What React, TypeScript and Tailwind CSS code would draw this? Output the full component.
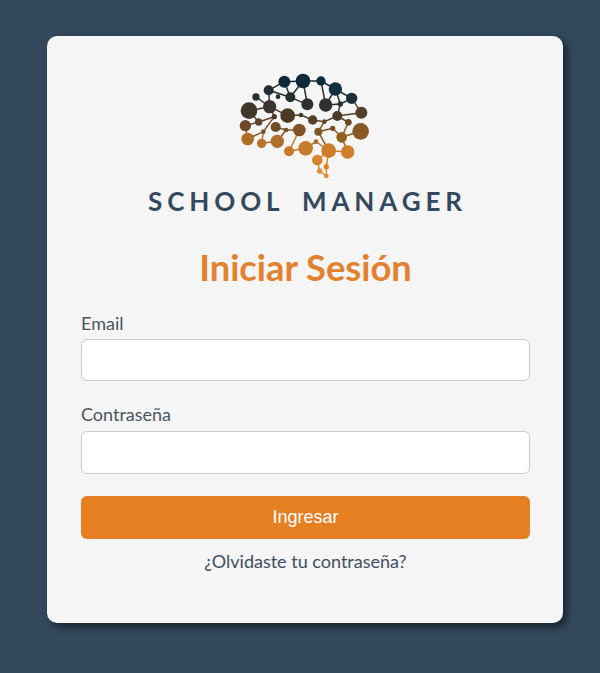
const nodes: [number, number, number, string][] = [
  [190, 50, 16, "#0e2a38"], [246, 48, 20, "#0e2a38"], [300, 48, 12, "#0f2c3a"], [343, 72, 18, "#10303f"],
  [392, 100, 15, "#1c2f38"], [143, 76, 13, "#1f2f35"], [105, 96, 9, "#24302f"], [171, 95, 5, "#1f2f35"],
  [208, 97, 13, "#22302f"], [259, 118, 16, "#2d3030"], [314, 120, 18, "#30302f"], [358, 117, 6, "#2d3030"],
  [84, 137, 23, "#40362a"], [146, 125, 18, "#3a3530"], [200, 152, 20, "#4a3a25"], [160, 155, 6, "#4a3a25"],
  [240, 150, 5, "#4a3a25"], [275, 165, 12, "#55412a"], [349, 153, 13, "#4a3c28"], [421, 143, 16, "#54402a"],
  [113, 171, 9, "#5e4528"], [73, 182, 15, "#6a4a28"], [164, 186, 13, "#6e4c26"], [127, 200, 5, "#7a5026"],
  [195, 195, 5, "#7a5026"], [235, 195, 17, "#7f5325"], [292, 200, 10, "#7f5a28"], [310, 170, 5, "#604628"],
  [335, 190, 6, "#7a5026"], [382, 172, 8, "#6a4a28"], [419, 199, 23, "#8a5824"], [362, 217, 14, "#96601f"],
  [80, 222, 17, "#b06f28"], [122, 235, 12, "#b8722a"], [169, 229, 18, "#b0702a"], [204, 259, 13, "#c67a2a"],
  [254, 250, 20, "#c67a2a"], [285, 230, 5, "#a86c28"], [323, 257, 20, "#cd7d2a"], [380, 261, 18, "#cf7e29"],
  [289, 285, 14, "#d8852e"], [316, 305, 6, "#d8852e"], [296, 318, 6, "#de8c36"], [316, 333, 5, "#de8c36"],
];

const edges: [number, number][] = [
  [0, 5], [0, 1], [1, 2], [2, 3], [3, 4], [5, 8], [0, 8], [1, 8], [8, 9], [1, 9], [2, 10], [3, 10],
  [10, 11], [3, 11], [11, 4], [4, 19], [11, 18], [18, 19], [6, 13], [5, 13], [12, 13], [13, 14],
  [13, 15], [15, 20], [14, 16], [16, 17], [17, 27], [27, 18], [12, 20], [20, 21], [21, 32], [15, 23],
  [23, 33], [32, 23], [33, 34], [34, 24], [24, 25], [22, 24], [25, 35], [35, 36], [36, 37],
  [37, 38], [38, 26], [26, 28], [28, 31], [27, 26], [29, 18], [29, 31], [31, 30], [38, 39],
  [39, 31], [38, 40], [38, 41], [40, 42], [41, 43], [42, 43],
];

function BrainLogo() {
  return (
    <svg viewBox="15 0 480 360" className="w-40 h-[120px]">
      {edges.map(([a, b], i) => (
        <line
          key={i}
          x1={nodes[a][0]}
          y1={nodes[a][1]}
          x2={nodes[b][0]}
          y2={nodes[b][1]}
          stroke={nodes[b][3]}
          strokeWidth="4.5"
        />
      ))}
      {nodes.map(([x, y, r, color], i) => (
        <circle key={i} cx={x} cy={y} r={r + 2} fill={color} />
      ))}
    </svg>
  );
}

export default function App() {
  return (
    <div className="min-h-[673px] bg-[#34495e] pt-9 pl-[47px] font-['Lato','Liberation_Sans',sans-serif]">
      {/* Card */}
      <div className="w-[516px] h-[587px] bg-[#f5f5f5] rounded-[10px] pl-[34px] pr-[33px] pt-[29px] shadow-[4px_4px_8px_rgba(0,0,0,0.55)]">
        {/* Logo */}
        <div className="flex flex-col items-center">
          <BrainLogo />
          <span className="text-[26px] leading-[30px] font-bold tracking-[4.9px] [word-spacing:7px] text-[#34495e] mt-[1px] ml-[4px] whitespace-nowrap">
            SCHOOL MANAGER
          </span>
        </div>

        <h1 className="text-[36.3px] leading-[44px] font-bold text-[#e2822f] text-center mt-[29px]">
          Iniciar Sesión
        </h1>

        {/* Form */}
        <form className="mt-[22px]">
          <label className="block text-[18px] leading-6 text-[#4a5560]">Email</label>
          <input
            type="email"
            className="block w-full h-[42px] mt-[4px] bg-white border border-[#cccccc] rounded-md"
          />
          <label className="block text-[18px] leading-6 text-[#4a5560] mt-[21px]">Contraseña</label>
          <input
            type="password"
            className="block w-full h-[43px] mt-[5px] bg-white border border-[#cccccc] rounded-md"
          />
          <button
            type="button"
            className="block w-full h-[43px] mt-[22px] bg-[#e67e22] text-white text-[18px] rounded-md font-['Liberation_Sans',sans-serif]"
          >
            Ingresar
          </button>
        </form>

        <div className="text-center text-[18px] leading-6 text-[#3f4f5f] mt-[10px]">¿Olvidaste tu contraseña?</div>
      </div>
    </div>
  );
}
